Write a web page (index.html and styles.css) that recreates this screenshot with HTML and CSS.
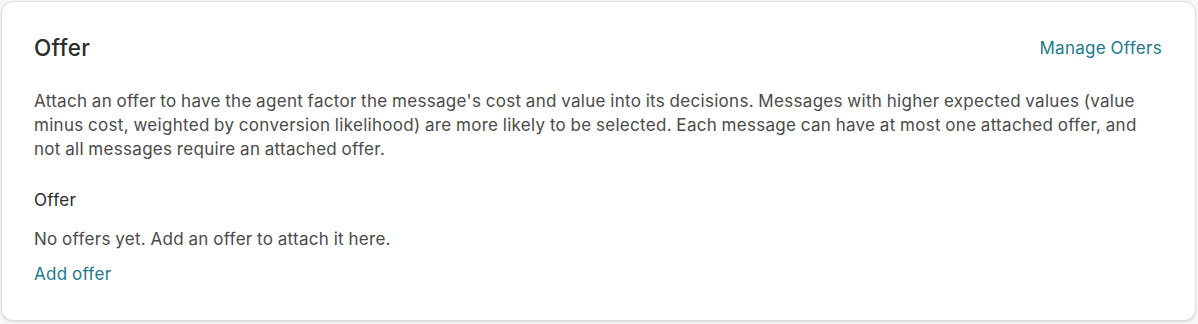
FILE: index.html
```html
<!DOCTYPE html>
<html lang="en">
<head>
    <meta charset="UTF-8">
    <title>Offer</title>
    <link rel="stylesheet" href="styles.css">
</head>
<body>

<div class="card">
    <div class="card-header">
        <h2 class="card-title">Offer</h2>
        <a class="link" href="#">Manage Offers</a>
    </div>
    <p class="description">Attach an offer to have the agent factor the message's cost and value into its decisions. Messages with higher expected values (value minus cost, weighted by conversion likelihood) are more likely to be selected. Each message can have at most one attached offer, and not all messages require an attached offer.</p>

    <div class="field">
        <div class="field-label">Offer</div>
        <p class="empty">No offers yet. Add an offer to attach it here.</p>
        <a class="link" href="#">Add offer</a>
    </div>
</div>

</body>
</html>
```

FILE: styles.css
```css
body {
    margin: 0;
    padding: 1px 2px 3px 1px;
    font-family: Inter, "Noto Sans", sans-serif;
    background: #f7f7f7;
    color: #4a4a4a;
    letter-spacing: 0.3px;
    word-spacing: -0.6px;
}
.card {
    background: #ffffff;
    border: 1px solid #dedede;
    border-radius: 12px;
    box-shadow: 0 1px 2px rgba(0, 0, 0, 0.12);
    padding: 32px 33px 34px 32px;
}
.card-header {
    display: flex;
    justify-content: space-between;
    align-items: center;
    height: 28px;
}
.card-title {
    margin: 0;
    font-size: 22.5px;
    font-weight: 500;
    line-height: 28px;
    letter-spacing: 0.3px;
    color: #2b2b2b;
}
.link {
    color: #1b7a8c;
    text-decoration: none;
    font-size: 17px;
    line-height: 24px;
}
.description {
    margin: 27px 0 0 0;
    font-size: 17px;
    line-height: 24px;
}
.field {
    margin-top: 27px;
}
.field-label {
    font-size: 17px;
    line-height: 24px;
    color: #2b2b2b;
}
.empty {
    margin: 15px 0 11px 0;
    font-size: 17px;
    line-height: 24px;
}
```
